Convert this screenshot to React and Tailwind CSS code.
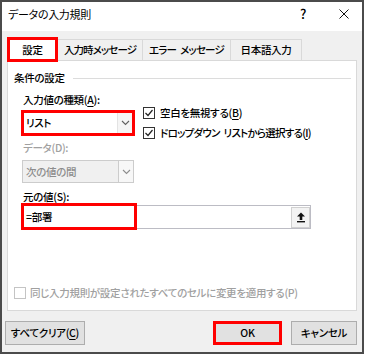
import React from 'react';

function Check({ checked, disabled }) {
  return (
    <span
      className={
        disabled
          ? 'flex h-[12px] w-[12px] shrink-0 items-center justify-center border border-[#c4c4c4] bg-white'
          : 'flex h-[12px] w-[12px] shrink-0 items-center justify-center border border-[#333333] bg-white'
      }
    >
      {checked && (
        <svg width="10" height="10" viewBox="0 0 10 10">
          <polyline points="1.5,5 4,7.5 8.5,2" fill="none" stroke="#222" strokeWidth="1.2" />
        </svg>
      )}
    </span>
  );
}

function Chevron({ color = '#606060' }) {
  return (
    <svg width="9" height="6" viewBox="0 0 9 6">
      <polyline points="1,1 4.5,4.5 8,1" fill="none" stroke={color} strokeWidth="1.1" />
    </svg>
  );
}

function U({ children }) {
  return <span className="underline underline-offset-2">{children}</span>;
}

export default function App() {
  return (
    <div className="h-[355px] w-[365px] bg-white font-['Noto_Sans_CJK_JP','Noto_Sans',sans-serif] text-[10.5px] font-medium leading-[14px] tracking-[-0.3px] text-black [font-feature-settings:'palt']">
      <div className="flex h-[354px] w-[364px] flex-col border-2 border-[#4b4b4b] bg-[#f0f0f0]">
        {/* title bar */}
        <div className="flex h-[29px] items-start bg-white pl-[6px] pr-[13px] pt-[3px] leading-[18px]">
          <span className="text-[11px] font-normal">データの入力規則</span>
          <span className="ml-auto text-[13px]">?</span>
          <svg className="ml-[33px] mt-[4px]" width="10" height="10" viewBox="0 0 10 10">
            <path d="M0.5 0.5 L9.5 9.5 M9.5 0.5 L0.5 9.5" stroke="#111" strokeWidth="1" />
          </svg>
        </div>

        {/* tabs */}
        <div className="mt-[6px] flex h-[23px] items-start pl-[5px]">
          <div className="relative z-10 flex h-[25px] w-[51px] items-center justify-center border-[3px] border-[#ff0000] bg-white">
            設定
          </div>
          <div className="mt-[2px] flex h-[21px] w-[85px] items-center justify-center border-r border-t border-[#d9d9d9] tracking-[-0.9px]">
            入力時メッセージ
          </div>
          <div className="mt-[2px] flex h-[21px] w-[88px] items-center justify-center border-r border-t border-[#d9d9d9] tracking-[-0.8px]">
            エラー<span className="ml-[4px]">メッセージ</span>
          </div>
          <div className="mt-[2px] flex h-[21px] w-[71px] items-center justify-center border-r border-t border-[#d9d9d9]">
            日本語入力
          </div>
        </div>

        {/* panel */}
        <div className="mx-[5px] flex h-[251px] flex-col border border-[#d9d9d9] bg-white pb-[10px] pl-[6px] pr-[5px] pt-[10px]">
          <div className="flex h-[14px] items-center gap-[8px]">
            <span>条件の設定</span>
            <div className="h-px flex-1 bg-[#dcdcdc]" />
          </div>

          <div className="pl-[9px]">
            <div className="flex">
              <div className="flex w-[112px] flex-col">
                <div className="mt-[8px]">
                  入力値の種類(<U>A</U>):
                </div>
                <div className="-ml-[2px] mt-[3px] flex h-[26px] w-[114px] items-center border-[3px] border-[#ff0000] bg-white">
                  <span className="pl-[2px]">リスト</span>
                  <span className="ml-auto flex h-full w-[15px] items-center justify-center border-l border-[#e3e3e3] bg-[#f5f5f5]">
                    <Chevron />
                  </span>
                </div>
                <div className="mt-[5px] text-[#a0a0a0]">データ(D):</div>
                <div className="-ml-[1px] mt-[5px] flex h-[23px] w-[112px] items-center border border-[#cccccc] bg-[#f0f0f0] text-[#8d8d8d]">
                  <span className="pl-[3px]">次の値の間</span>
                  <span className="ml-auto flex h-full w-[15px] items-center justify-center border-l border-[#cccccc] bg-[#f7f7f7]">
                    <Chevron color="#8d8d8d" />
                  </span>
                </div>
              </div>

              <div className="ml-[8px] mt-[18px] flex flex-col">
                <div className="flex h-[20px] items-center gap-[5px]">
                  <Check checked />
                  <span>
                    空白を無視する(<U>B</U>)
                  </span>
                </div>
                <div className="flex h-[20px] items-center gap-[5px]">
                  <Check checked />
                  <span className="tracking-[-0.75px]">
                    ドロップダウン<span className="ml-[4px]">リストから選択する(<U>I</U>)</span>
                  </span>
                </div>
              </div>
            </div>

            <div className="mt-[7px]">
              元の値(<U>S</U>):
            </div>
            <div className="relative -ml-[1px] mt-[1px] flex h-[24px] w-[289px] items-center border border-[#bcbcc4] bg-white">
              <span className="pl-[3px]">=部署</span>
              <span className="ml-auto flex h-[21px] w-[19px] items-center justify-center border border-[#d0d0d0] bg-[#f3f3f3]">
                <svg width="10" height="11" viewBox="0 0 10 11">
                  <path d="M5 0.5 L9 4.5 H6.3 V8 H3.7 V4.5 H1 Z" fill="#111" />
                  <rect x="1" y="9" width="8" height="1.4" fill="#111" />
                </svg>
              </span>
              <div className="absolute -left-[2px] -top-[3px] h-[27px] w-[116px] border-[3px] border-[#ff0000]" />
            </div>
          </div>

          <div className="mt-auto flex h-[14px] items-center gap-[4px] text-[#a0a0a0]">
            <Check disabled />
            <span>同じ入力規則が設定されたすべてのセルに変更を適用する(P)</span>
          </div>
        </div>

        {/* buttons */}
        <div className="mt-[10px] flex items-start pl-[3px] pr-[5px]">
          <button className="flex h-[24px] w-[80px] items-center justify-center border border-[#adadad] bg-[#e1e1e1]">
            すべてクリア(<U>C</U>)
          </button>
          <button className="ml-auto flex h-[24px] w-[69px] items-center justify-center border-[3px] border-[#ff0000] bg-[#e1e1e1]">
            OK
          </button>
          <button className="ml-[9px] flex h-[24px] w-[66px] items-center justify-center border border-[#adadad] bg-[#e1e1e1]">
            キャンセル
          </button>
        </div>
      </div>
    </div>
  );
}
